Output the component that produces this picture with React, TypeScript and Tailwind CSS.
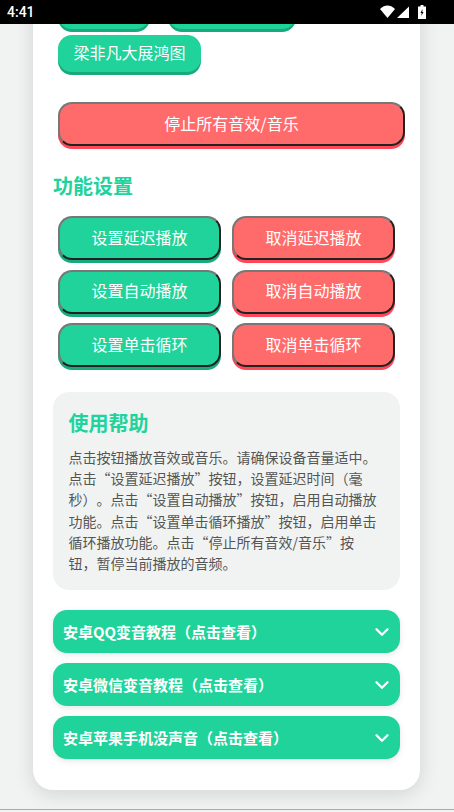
import React from 'react';
import { ChevronDown } from 'lucide-react';

const sound = 'h-[37px] rounded-[14px] bg-[#20d39a] shadow-[0_3px_0_#1aa97c] text-white text-[16px] px-[15.5px] pb-[3px] whitespace-nowrap';
const green = 'h-[44px] rounded-[14px] border-2 border-t-[#777] border-l-[#777] border-r-[#222] border-b-[#222] bg-[#20d39a] shadow-[0_3px_0_#1aa97c] text-white text-[16px] pb-[3px]';
const red = 'h-[44px] rounded-[14px] border-2 border-t-[#777] border-l-[#777] border-r-[#222] border-b-[#222] bg-[#ff6b6b] shadow-[0_3px_0_#ff4757] text-white text-[16px] pb-[3px]';

const settings = [
  ['设置延迟播放', '取消延迟播放'],
  ['设置自动播放', '取消自动播放'],
  ['设置单击循环', '取消单击循环'],
];

const tutorials = ['安卓QQ变音教程（点击查看）', '安卓微信变音教程（点击查看）', '安卓苹果手机没声音（点击查看）'];

const App: React.FC = () => {
  return (
    <div className="h-[812px] w-[454px] overflow-hidden flex flex-col bg-[#f1f3f2] font-['Noto_Sans_CJK_SC','Noto_Sans',sans-serif]">
      {/* Status bar */}
      <div className="h-[24px] shrink-0 bg-black text-white flex items-center justify-between pl-[7px] pr-[28px] relative z-10">
        <span className="text-[14px] font-medium font-['Roboto',sans-serif]">4:41</span>
        <div className="flex items-center gap-[8px]">
          <svg width="30" height="14" viewBox="0 0 30 14" fill="white">
            <path d="M0 4C2.500 1.500 5 0.500 7.500 0.500S12.500 1.500 15 4L7.500 13Z" />
            <path d="M29 1.500V13H17Z" />
          </svg>
          <svg width="8" height="14" viewBox="0 0 8 14">
            <path d="M2.500 0h3v1.500H8V14H0V1.500h2.500Z" fill="white" />
            <path d="M4.500 4 2.500 8h1.200L3.300 11l2.200-4H4.300Z" fill="black" />
          </svg>
        </div>
      </div>

      <div className="flex-1 overflow-hidden border-b border-[#aaa] mb-[2px] pl-[33px]">
        <div className="w-[387px] -mt-[32px] bg-white rounded-[20px] shadow-[0_4px_20px_rgba(0,0,0,0.13)] px-[20px] pb-[31px]">
          {/* Sound buttons, the first row is scrolled out of view */}
          <div className="pl-[5px] flex flex-wrap gap-x-[18px] gap-y-[6px]">
            <button className={`${sound} w-[92px]`}></button>
            <button className={`${sound} w-[128px]`}></button>
            <button className={sound}>梁非凡大展鸿图</button>
          </div>

          <div className="pl-[5px] mt-[30px]">
            <button className={`${red} w-[347px]`}>停止所有音效/音乐</button>
          </div>

          <h2 className="mt-[25px] text-[20px] leading-[30px] font-bold text-[#20d39a]">功能设置</h2>

          <div className="mt-[15px] pl-[5px] flex flex-col gap-[9.5px]">
            {settings.map(([on, off]) => (
              <div key={on} className="flex gap-[11px]">
                <button className={`${green} w-[163px]`}>{on}</button>
                <button className={`${red} w-[163px]`}>{off}</button>
              </div>
            ))}
          </div>

          <div className="mt-[25px] h-[198px] rounded-[16px] bg-[#f1f3f2] pl-[15.5px] pr-[19px] pt-[18px]">
            <h3 className="text-[20px] leading-[26px] font-bold text-[#20d39a]">使用帮助</h3>
            <p className="mt-[11px] text-[14px] leading-[21.2px] text-[#555] [text-spacing-trim:space-all]">
              点击按钮播放音效或音乐。请确保设备音量适中。点击“设置延迟播放”按钮，设置延迟时间（毫秒）。点击“设置自动播放”按钮，启用自动播放功能。点击“设置单击循环播放”按钮，启用单击循环播放功能。点击“停止所有音效/音乐”按钮，暂停当前播放的音频。
            </p>
          </div>

          <div className="mt-[20px] flex flex-col gap-[10px]">
            {tutorials.map((name) => (
              <div key={name} className="h-[43px] rounded-[14px] bg-[#20d39a] shadow-[0_2px_6px_rgba(0,0,0,0.1)] pl-[10px] pr-[7px] flex items-center justify-between text-white">
                <span className="text-[15px] font-bold translate-y-[1px]">{name}</span>
                <ChevronDown size={22} strokeWidth={2.5} />
              </div>
            ))}
          </div>
        </div>
      </div>
    </div>
  );
};

export default App;
